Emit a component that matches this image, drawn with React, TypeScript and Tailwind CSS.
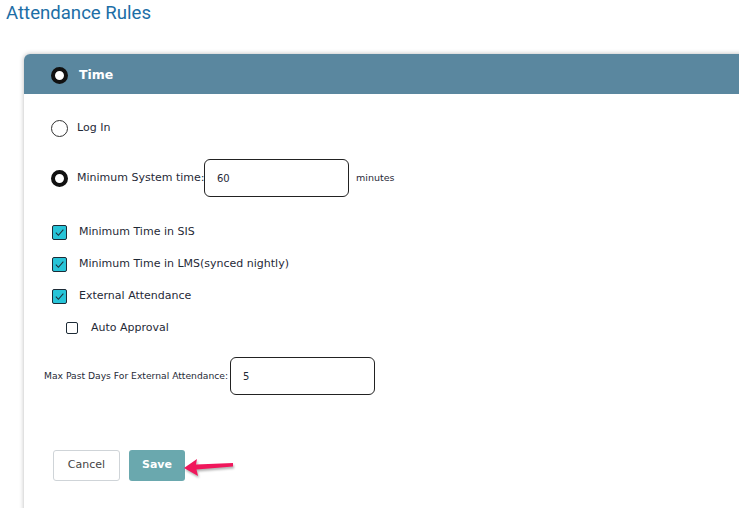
import { useState } from 'react';

const FONT = { fontFamily: '"DejaVu Sans", "Open Sans", sans-serif' };

function Radio({ checked, onClick }: { checked: boolean; onClick?: () => void }) {
  return (
    <span
      onClick={onClick}
      className={`inline-block w-[17px] h-[17px] rounded-full bg-white shrink-0 ${checked ? 'border-[4.5px] border-[#111]' : 'border-[1.5px] border-[#333]'}`}
    />
  );
}

function Checkbox({ checked, onClick }: { checked: boolean; onClick?: () => void }) {
  return (
    <span
      onClick={onClick}
      className={`inline-flex items-center justify-center w-[15px] h-[15px] rounded-[2px] border-[1.5px] border-[#1d2b36] shrink-0 ${checked ? 'bg-[#27c4d8]' : 'bg-white'}`}
    >
      {checked && (
        <svg width="11" height="11" viewBox="0 0 12 12" fill="none">
          <path d="M2 6.2 L4.8 9 L10.2 2.8" stroke="#1d2b36" strokeWidth="1.1" />
        </svg>
      )}
    </span>
  );
}

export default function App() {
  const [mode, setMode] = useState<'login' | 'min'>('min');
  const [sis, setSis] = useState(true);
  const [lms, setLms] = useState(true);
  const [ext, setExt] = useState(true);
  const [auto, setAuto] = useState(false);

  return (
    <div className="w-[739px] h-[508px] overflow-hidden bg-white relative">
      <h1 className="pl-[6px] pt-[1px] text-[18.6px] leading-[24px] text-[#1c6ea6]" style={{ fontFamily: 'Roboto, sans-serif' }}>
        Attendance Rules
      </h1>

      <div className="ml-[24px] mt-[29px] w-[760px] h-[470px] bg-white rounded-tl-[6px] shadow-[0_0_5px_rgba(0,0,0,0.28)] text-[#1f2a37]" style={FONT}>
        <div className="h-[40px] bg-[#5a879f] rounded-tl-[6px] flex items-center pl-[27px] pt-[3px] gap-[11px]">
          <Radio checked />
          <span className="text-white font-bold text-[12.5px]">Time</span>
        </div>

        <div className="pt-[25px] pl-[27px]">
          <div className="flex items-center gap-[9px] h-[18px]">
            <Radio checked={mode === 'login'} onClick={() => setMode('login')} />
            <span className="text-[11px]">Log In</span>
          </div>

          <div className="flex items-center mt-[22px] h-[38px]">
            <Radio checked={mode === 'min'} onClick={() => setMode('min')} />
            <span className="text-[11px] ml-[9px] whitespace-nowrap w-[127px] overflow-hidden">Minimum System time:</span>
            <input
              defaultValue="60"
              className="w-[145px] h-[38px] border-[1.5px] border-[#222] rounded-[6px] px-[12px] text-[10px] outline-none"
            />
            <span className="text-[9.5px] ml-[7px]">minutes</span>
          </div>

          <div className="flex flex-col gap-[16px] mt-[27px]">
            <label className="flex items-center gap-[12px] h-[16px] ml-[1px]">
              <Checkbox checked={sis} onClick={() => setSis(!sis)} />
              <span className="text-[11px]">Minimum Time in SIS</span>
            </label>
            <label className="flex items-center gap-[12px] h-[16px] ml-[1px]">
              <Checkbox checked={lms} onClick={() => setLms(!lms)} />
              <span className="text-[11px]">Minimum Time in LMS(synced nightly)</span>
            </label>
            <label className="flex items-center gap-[12px] h-[16px] ml-[1px]">
              <Checkbox checked={ext} onClick={() => setExt(!ext)} />
              <span className="text-[11px]">External Attendance</span>
            </label>
            <label className="flex items-center gap-[13px] h-[16px] ml-[15px]">
              <span className="inline-block w-[12px] h-[12px] rounded-[2px] border-[1.5px] border-[#1d2b36] bg-white" onClick={() => setAuto(!auto)} />
              <span className="text-[11px]">Auto Approval</span>
            </label>
          </div>

          <div className="flex items-center mt-[21px] -ml-[7px] h-[38px]">
            <span className="text-[9.2px] whitespace-nowrap w-[186px] overflow-hidden">Max Past Days For External Attendance:</span>
            <input
              defaultValue="5"
              className="w-[145px] h-[38px] border-[1.5px] border-[#222] rounded-[6px] px-[12px] text-[10px] outline-none"
            />
          </div>

          <div className="flex items-center gap-[9px] mt-[55px] ml-[2px]">
            <button className="w-[67px] h-[31px] border border-[#cfd4d8] rounded-[3px] text-[11px] text-[#444] bg-white">
              Cancel
            </button>
            <button className="w-[56px] h-[31px] rounded-[3px] text-[11px] font-bold text-white bg-[#6aa8ae]">
              Save
            </button>
            <svg width="54" height="22" viewBox="0 0 54 22" className="-ml-[12px] drop-shadow-[1px_2px_1px_rgba(0,0,0,0.3)]">
              <path d="M2 13 L15 4 L14 9.5 L51 8 L51 11.5 L14.5 14.5 L16 21 Z" fill="#f0175c" />
            </svg>
          </div>
        </div>
      </div>
    </div>
  );
}
